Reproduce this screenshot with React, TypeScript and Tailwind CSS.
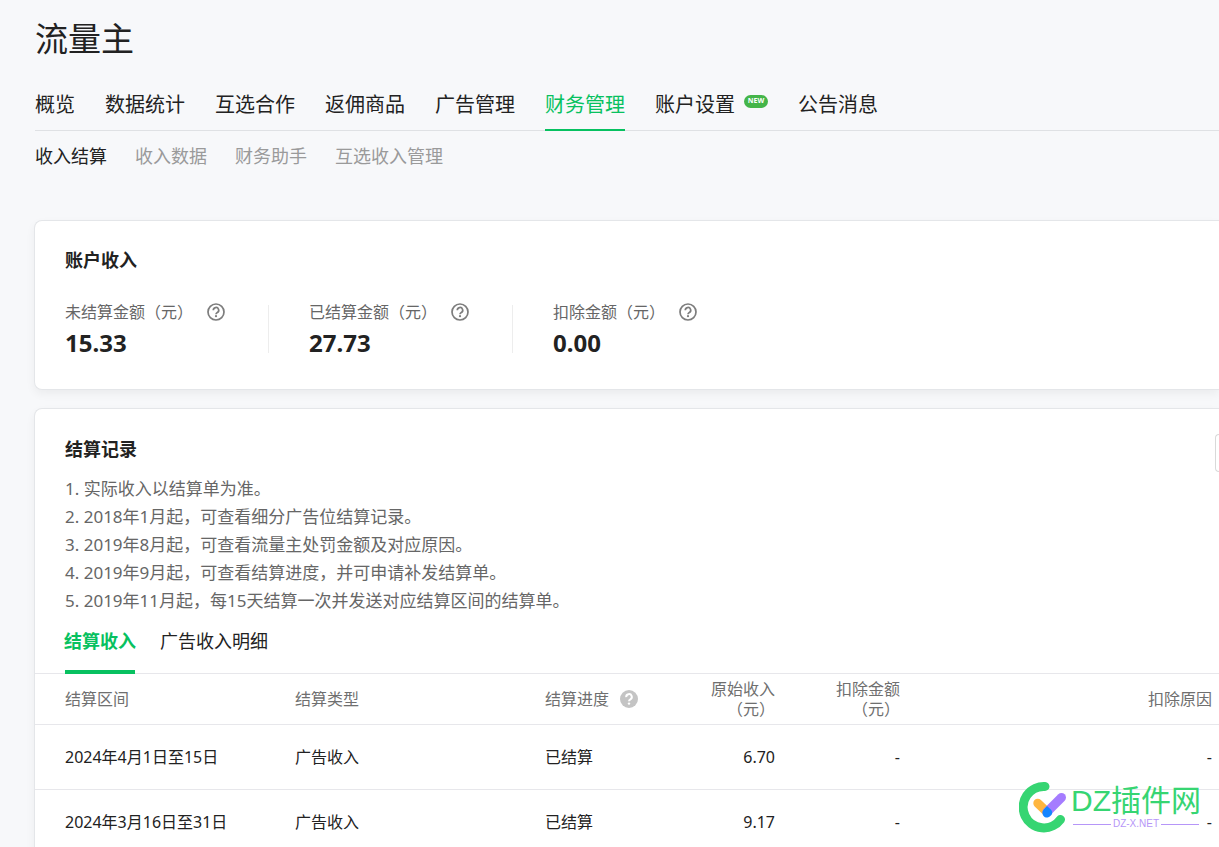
import React from "react";

type NavItem = { label: string; active?: boolean; isNew?: boolean };

const mainNav: NavItem[] = [
  { label: "概览" },
  { label: "数据统计" },
  { label: "互选合作" },
  { label: "返佣商品" },
  { label: "广告管理" },
  { label: "财务管理", active: true },
  { label: "账户设置", isNew: true },
  { label: "公告消息" },
];

const subNav: NavItem[] = [
  { label: "收入结算", active: true },
  { label: "收入数据" },
  { label: "财务助手" },
  { label: "互选收入管理" },
];

const stats = [
  { label: "未结算金额（元）", value: "15.33" },
  { label: "已结算金额（元）", value: "27.73" },
  { label: "扣除金额（元）", value: "0.00" },
];

const notes = [
  "1. 实际收入以结算单为准。",
  "2. 2018年1月起，可查看细分广告位结算记录。",
  "3. 2019年8月起，可查看流量主处罚金额及对应原因。",
  "4. 2019年9月起，可查看结算进度，并可申请补发结算单。",
  "5. 2019年11月起，每15天结算一次并发送对应结算区间的结算单。",
];

const records = [
  { period: "2024年4月1日至15日", type: "广告收入", status: "已结算", income: "6.70" },
  { period: "2024年3月16日至31日", type: "广告收入", status: "已结算", income: "9.17" },
];

function HelpOutline() {
  return (
    <svg viewBox="0 0 18 18" className="size-[18px]" fill="none" stroke="#7d7d7d" strokeWidth="1.7" aria-hidden="true">
      <circle cx="9" cy="9" r="8" />
      <path d="M6.3 7.3a2.7 2.7 0 1 1 4.1 2.2c-1 .6-1.4.8-1.4 1.8" />
      <circle cx="9" cy="13.2" r="1.1" fill="#7d7d7d" stroke="none" />
    </svg>
  );
}

function HelpSolid() {
  return (
    <svg viewBox="0 0 18 18" className="size-[18px]" fill="none" aria-hidden="true">
      <circle cx="9" cy="9" r="9" fill="#c4c4c4" />
      <path d="M6.2 7.1a2.8 2.8 0 1 1 4.2 2.2c-1 .6-1.4 1-1.4 2" stroke="#fff" strokeWidth="2" />
      <circle cx="9" cy="13.6" r="1.2" fill="#fff" />
    </svg>
  );
}

function Watermark() {
  return (
    <div className="pointer-events-none absolute right-[18px] bottom-[14px] flex items-start gap-[2px]">
      <svg viewBox="0 0 50 52" className="h-[52px] w-[50px]" fill="none" strokeLinecap="round">
        <path d="M26 5.5 A20.7 20.7 0 1 0 41.5 38.5" stroke="#36d572" strokeWidth="9" />
        <path d="M18.8 22.2 L28 31" stroke="#ffb63f" strokeWidth="9" />
        <path d="M28 31 L42.5 16.5" stroke="#a57cff" strokeWidth="9" />
        <path d="M28 25 l4.3 4 a4.5 4.5 0 0 1 -1 6 a4.5 4.5 0 0 1 -7.6 -1.5 a4.5 4.5 0 0 1 .6 -4.5 Z" fill="#1585ff" />
      </svg>
      <div className="flex flex-col pt-[2px]">
        <span className="font-['Liberation_Sans','Noto_Sans_CJK_SC',sans-serif] text-[30px] leading-[36px] whitespace-nowrap text-[#36d572]">
          DZ插件网
        </span>
        <span className="flex items-center gap-[2px] px-[2px] font-['Liberation_Sans',sans-serif] text-[10px] leading-[10px] text-[#b696f8]">
          <span className="h-px flex-1 bg-[#b696f8]" />
          DZ-X.NET
          <span className="h-px flex-1 bg-[#b696f8]" />
        </span>
      </div>
    </div>
  );
}

export default function App() {
  return (
    <div className="relative h-screen overflow-hidden bg-[#f7f8fa] pl-[34px] font-['Noto_Sans','Noto_Sans_CJK_SC',sans-serif] text-[#222]">
      <header className="pt-4 pl-px">
        <h1 className="text-[33px] leading-[46px]">流量主</h1>
        <nav className="mt-[18px] flex gap-[30px] border-b border-[#dfe1e4] text-[20px] whitespace-nowrap">
          {mainNav.map((item) => (
            <a
              key={item.label}
              href="#"
              className={
                item.active
                  ? "-mb-px flex h-[51px] items-center border-b-2 border-[#07c160] text-[#07c160]"
                  : "flex h-[50px] items-center"
              }
            >
              {item.label}
              {item.isNew && (
                <span className="mb-[7px] ml-[9px] flex h-[13px] w-6 items-center justify-center rounded-full bg-[#44b549] text-[7px] font-bold text-white">
                  NEW
                </span>
              )}
            </a>
          ))}
        </nav>
        <nav className="flex h-[50px] items-center gap-[28px] text-[18px] whitespace-nowrap">
          {subNav.map((item) => (
            <a key={item.label} href="#" className={item.active ? "text-[#222]" : "text-[#9a9a9a]"}>
              {item.label}
            </a>
          ))}
        </nav>
      </header>

      <main className="mt-[39px] flex flex-col gap-[18px]">
        <section className="rounded-l-lg border border-r-0 border-[#e4e6e9] bg-white pt-[25px] pb-9 pl-[30px] shadow-[0_4px_10px_rgba(0,0,0,0.05)]">
          <h2 className="text-[18px] leading-[28px] font-bold">账户收入</h2>
          <dl className="mt-[31px] flex">
            {stats.map((s) => (
              <div
                key={s.label}
                className="mr-10 h-12 border-r border-[#ededed] pr-[43px] last:mr-0 last:border-r-0"
              >
                <dt className="flex h-[14px] items-center gap-[14px] text-[16px] whitespace-nowrap text-[#666]">
                  {s.label}
                  <button type="button" aria-label="说明">
                    <HelpOutline />
                  </button>
                </dt>
                <dd className="mt-[6px] text-[24px] leading-[36px] font-bold">{s.value}</dd>
              </div>
            ))}
          </dl>
        </section>

        <section className="rounded-tl-lg border border-r-0 border-[#e4e6e9] bg-white pt-[25px] shadow-[0_4px_10px_rgba(0,0,0,0.05)]">
          <div className="flex items-start justify-between pl-[30px]">
            <div>
              <h2 className="text-[18px] leading-[30px] font-bold">结算记录</h2>
              <ol className="mt-[11px] text-[17px] leading-[28px] text-[#666]">
                {notes.map((n) => (
                  <li key={n}>{n}</li>
                ))}
              </ol>
            </div>
            <button
              type="button"
              aria-label="筛选"
              className="h-[38px] w-1 shrink-0 rounded-l border border-r-0 border-[#d9d9d9]"
            />
          </div>
          <div className="flex h-[59px] gap-[25px] border-b border-[#e7e7eb] pl-[30px] text-[18px] whitespace-nowrap">
            <button
              type="button"
              className="-mb-px flex w-[70px] justify-center border-b-4 border-[#07c160] pt-[12px] leading-[28px] font-bold text-[#07c160]"
            >
              结算收入
            </button>
            <button type="button" className="flex pt-[12px] leading-[28px]">
              广告收入明细
            </button>
          </div>
          <table className="w-full table-fixed text-left text-[16px]">
            <colgroup>
              <col className="w-[260px]" />
              <col className="w-[250px]" />
              <col className="w-[140px]" />
              <col className="w-[90px]" />
              <col className="w-[125px]" />
              <col />
            </colgroup>
            <thead className="leading-[20px] text-[#6f6f6f]">
              <tr className="h-[50px] border-b border-[#e7e7eb] *:font-normal">
                <th className="pl-[30px]">结算区间</th>
                <th>结算类型</th>
                <th>
                  <span className="flex items-center gap-[11px]">
                    结算进度
                    <button type="button" aria-label="说明">
                      <HelpSolid />
                    </button>
                  </span>
                </th>
                <th className="text-right">
                  原始收入
                  <br />
                  （元）
                </th>
                <th className="text-right">
                  扣除金额
                  <br />
                  （元）
                </th>
                <th className="pr-[7px] text-right">扣除原因</th>
              </tr>
            </thead>
            <tbody>
              {records.map((r) => (
                <tr key={r.period} className="h-[65px] border-b border-[#e7e7eb]">
                  <td className="pl-[30px]">{r.period}</td>
                  <td>{r.type}</td>
                  <td>{r.status}</td>
                  <td className="text-right">{r.income}</td>
                  <td className="text-right">-</td>
                  <td className="pr-[7px] text-right">-</td>
                </tr>
              ))}
            </tbody>
          </table>
        </section>
      </main>
      <Watermark />
    </div>
  );
}
